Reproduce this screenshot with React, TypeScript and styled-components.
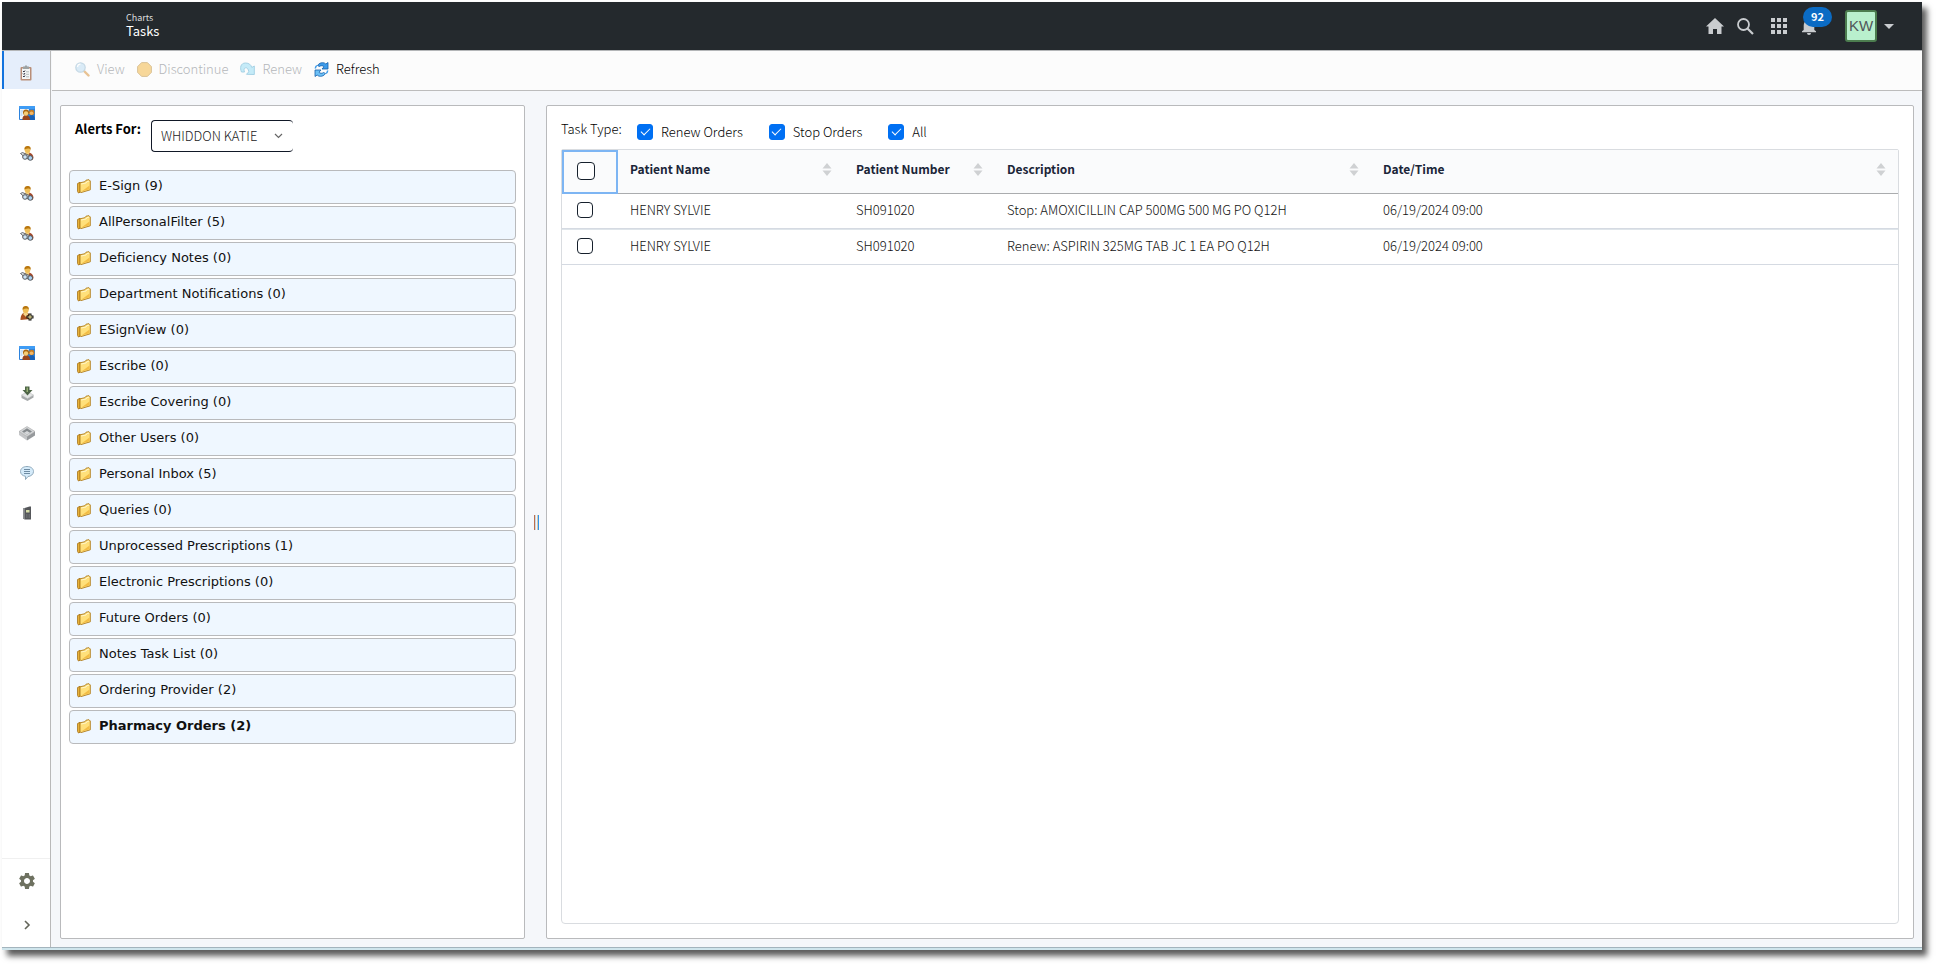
import React, { useState } from "react";
import styled, { createGlobalStyle } from "styled-components";

const SANS = '"Noto Sans CJK SC", "Noto Sans", sans-serif';
const WIDE = '"DejaVu Sans", Verdana, sans-serif';

const GlobalStyle = createGlobalStyle`
  *, *::before, *::after { box-sizing: border-box; }
  body { margin: 0; background: #fff; font-family: ${SANS}; font-size: 12px; line-height: 16px; color: #111; }
  button, select, input { font: inherit; color: inherit; margin: 0; padding: 0; }
  button { background: none; border: 0; cursor: pointer; }
  svg { display: block; flex: none; }
`;

const Page = styled.div`
  min-height: 100vh;
  padding: 2px 14px 14px 2px;
  display: flex;
`;

const Window = styled.div`
  flex: 1;
  min-width: 0;
  display: flex;
  flex-direction: column;
  background: #f5f7fa;
  border-bottom: 2px solid #cfe5ec;
  box-shadow: 5px 6px 6px #5c5c5c;
`;

const Header = styled.header`
  height: 49px;
  display: flex;
  align-items: center;
  justify-content: space-between;
  background: #24292d;
  border-bottom: 1px solid #b4b6b8;
  padding: 0 28px 0 124px;
`;

const Titles = styled.div`
  color: #fff;
  padding-bottom: 2px;
`;

const Crumb = styled.div`
  font-size: 9px;
  line-height: 12px;
  color: #dcdedf;
`;

const Title = styled.h1`
  margin: 0;
  font-size: 13px;
  line-height: 14px;
  font-weight: 400;
`;

const HeaderTools = styled.div`
  display: flex;
  align-items: center;
  color: #c9cccf;
`;

const HeaderButton = styled.button<{ $width: number }>`
  position: relative;
  width: ${(p) => p.$width}px;
  height: 32px;
  display: flex;
  align-items: center;
  justify-content: center;
`;

const Badge = styled.span`
  position: absolute;
  left: 5px;
  top: -3px;
  width: 29px;
  height: 20px;
  border-radius: 10px;
  background: #0b6bc4;
  color: #fff;
  font-size: 11px;
  line-height: 19px;
  font-weight: 700;
  text-align: center;
`;

const Account = styled.button`
  display: flex;
  align-items: center;
  gap: 7px;
  margin-left: 25px;
`;

const Avatar = styled.span`
  width: 32px;
  height: 32px;
  border: 2px solid #4c7d4f;
  border-radius: 3px;
  background: #b9f0cd;
  color: #50565a;
  font-family: "Liberation Sans", Arial, sans-serif;
  font-size: 15px;
  line-height: 28px;
  text-align: center;
`;

const Body = styled.div`
  flex: 1;
  display: flex;
  min-height: 0;
  border-bottom: 1px solid #a3b4bd;
`;

const Sidebar = styled.nav`
  flex: none;
  width: 49px;
  display: flex;
  flex-direction: column;
  justify-content: space-between;
  background: #fff;
  border-right: 1px solid #b9b9b9;
`;

const SideGroup = styled.div`
  display: flex;
  flex-direction: column;
  gap: 2px;
`;

const SideBottom = styled.div`
  border-top: 1px solid #f0f0f0;
  color: #6e7160;
`;

const SideButton = styled.button<{ $active?: boolean; $tall?: boolean }>`
  width: 48px;
  height: ${(p) => (p.$tall ? 44 : 38)}px;
  display: flex;
  align-items: center;
  justify-content: center;
  padding: ${(p) => (p.$tall ? "0 0 0 2px" : p.$active ? "6px 2px 0 0" : "6px 0 0 2px")};
  border-left: ${(p) => (p.$active ? "2px solid #1273de" : "0")};
  background: ${(p) => (p.$active ? "#e5eefb" : "transparent")};
`;

const Main = styled.main`
  flex: 1;
  min-width: 0;
  display: flex;
  flex-direction: column;
`;

const Toolbar = styled.div`
  flex: none;
  height: 40px;
  display: flex;
  align-items: center;
  gap: 12px;
  margin-left: 1px;
  padding: 0 0 3px 23px;
  background: #fcfcfc;
  border-bottom: 1px solid #bcbcbc;
`;

const ToolButton = styled.button`
  display: flex;
  align-items: center;
  gap: 7px;
  font-size: 13px;
  line-height: 18px;
  font-weight: 300;
  color: #000;
  &:disabled { color: #b4b7ba; cursor: default; }
  &:disabled svg { opacity: 0.5; }
`;

const Split = styled.div`
  flex: 1;
  display: flex;
  padding: 14px 8px 8px 9px;
`;

const Panel = styled.section`
  background: #fff;
  border: 1px solid #b9babc;
  border-radius: 2px;
`;

const AlertsPanel = styled(Panel)`
  flex: none;
  width: 465px;
  padding: 14px 8px;
`;

const TasksPanel = styled(Panel)`
  flex: 1;
  min-width: 0;
  display: flex;
  flex-direction: column;
  padding: 14px;
`;

const Gutter = styled.div`
  flex: none;
  width: 21px;
  display: flex;
  align-items: center;
  justify-content: center;
  padding-left: 2px;
`;

const AlertsFor = styled.div`
  display: flex;
  gap: 10px;
  padding-left: 6px;
  margin-bottom: 18px;
`;

const AlertsLabel = styled.label`
  font-size: 13px;
  line-height: 18px;
  font-weight: 700;
  color: #000;
`;

const SelectWrap = styled.div`
  position: relative;
  width: 142px;
  color: #222;
`;

const Select = styled.select`
  appearance: none;
  width: 100%;
  height: 32px;
  padding: 0 30px 0 9px;
  border: 1px solid #111827;
  border-right: 0;
  border-radius: 4px;
  background: #fff;
  font-size: 13px;
  font-weight: 300;
`;

const SelectArrow = styled.svg`
  position: absolute;
  right: 10px;
  top: 13px;
  pointer-events: none;
`;

const FolderList = styled.ul`
  list-style: none;
  margin: 0;
  padding: 0;
  display: flex;
  flex-direction: column;
  gap: 2px;
`;

const FolderButton = styled.button<{ $selected: boolean }>`
  width: 100%;
  height: 34px;
  display: flex;
  align-items: center;
  gap: 8px;
  padding: 0 7px 2px;
  border: 1px solid #b9babc;
  border-radius: 4px;
  background: #eff7ff;
  font-family: ${WIDE};
  font-size: 13px;
  line-height: 16px;
  font-weight: ${(p) => (p.$selected ? 700 : 400)};
  color: #111;
`;

const Filters = styled.fieldset`
  display: flex;
  height: 29px;
  margin: 0;
  padding: 0;
  border: 0;
`;

const FiltersTitle = styled.span`
  width: 76px;
  font-size: 13px;
  line-height: 18px;
  font-weight: 300;
  color: #000;
`;

const FilterLabel = styled.label`
  height: 24px;
  display: flex;
  align-items: center;
  gap: 8px;
  margin-right: 26px;
  font-size: 13px;
  font-weight: 300;
  color: #000;
`;

const Check = styled.input<{ $size?: number }>`
  appearance: none;
  flex: none;
  display: grid;
  place-items: center;
  width: ${(p) => p.$size || 16}px;
  height: ${(p) => p.$size || 16}px;
  border: 1px solid #16202c;
  border-radius: 4px;
  background: #fff;
  &:checked { background: #0070f3; border-color: #0070f3; border-radius: 3px; }
  &:checked::after {
    content: "";
    width: 9px;
    height: 5px;
    margin-bottom: 3px;
    border: solid #fff;
    border-width: 0 0 1px 1px;
    transform: rotate(-45deg);
  }
`;

const Grid = styled.div`
  flex: 1;
  border: 1px solid #d9dce0;
  border-radius: 2px 2px 4px 4px;
`;

const Table = styled.table`
  width: 100%;
  table-layout: fixed;
  border-collapse: separate;
  border-spacing: 0;
`;

const HeadCell = styled.th<{ $width?: number }>`
  width: ${(p) => (p.$width ? p.$width + "px" : "auto")};
  height: 44px;
  padding: 0 12px 5px 12px;
  background: #fafbfc;
  border-bottom: 1px solid #aaacae;
  color: #1b2538;
  text-align: left;
  font-size: 12px;
  font-weight: 700;
`;

const HeadCheckCell = styled(HeadCell)`
  padding: 0 0 2px 13px;
  border: 2px solid #7db5f3;
`;

const HeadInner = styled.button`
  width: 100%;
  display: flex;
  align-items: center;
  justify-content: space-between;
  font-weight: 700;
`;

const Row = styled.tr`
  & + & td { height: 36px; border-top: 1px solid #dfe5ea; }
`;

const Cell = styled.td`
  height: 35px;
  padding: 0 12px 2px;
  border-bottom: 1px solid #d5dae2;
  color: #111;
  font-size: 13px;
  font-weight: 300;
  white-space: nowrap;
  overflow: hidden;
`;

const CheckCell = styled(Cell)`
  padding: 0 0 2px 15px;
`;

const Clipboard = () => (
  <svg width="12" height="16" viewBox="0 0 12 16">
    <rect x=".5" y="2" width="11" height="13.5" rx="1" fill="#b98e78" />
    <rect x="2" y="3.5" width="8" height="10.5" fill="#f4f6f6" />
    <path d="M3 1.5h1.5L6 0l1.500 1.500H9V4H3z" fill="#9ca2a3" />
    <path d="M3 6l1 1 1-1.500M3 8.500l1 1 1-1.500M3 11l1 1 1-1.500" stroke="#334" strokeWidth="1" fill="none" />
    <path d="M6 6.800h3M6 9.300h3M6 11.800h3" stroke="#b5bcbc" />
  </svg>
);

const Contacts = () => (
  <svg width="16" height="14" viewBox="0 0 16 14">
    <rect width="16" height="14" rx="1" fill="#2b82dd" />
    <rect width="16" height="3" rx="1" fill="#3f9cf5" />
    <path d="M1 3h9L7 13H1z" fill="#f2f8ff" />
    <path d="M1.500 5h2.500M1.500 7h2M1.500 9h2" stroke="#9cc7ee" />
    <path d="M9.500 14c0-4 1.300-5 3.300-5S16 10.500 16 14z" fill="#1860b5" />
    <circle cx="12.700" cy="6.500" r="2.700" fill="#c67a22" />
    <circle cx="12.500" cy="7.300" r="1.800" fill="#f0b867" />
    <path d="M3.300 14c0-3.500 1.500-5 3.700-5s4 1.500 4 5z" fill="#98451c" />
    <circle cx="7" cy="6.500" r="3" fill="#a9660f" />
    <circle cx="7" cy="7.500" r="2.200" fill="#f4cd78" />
  </svg>
);

const Finder = () => (
  <svg width="14" height="15" viewBox="0 0 14 15">
    <path d="M2.500 11.500C2.500 8.500 4.500 6.500 8 6.500s5.500 2.500 5.500 5.500l-1 2z" fill="#a5492a" />
    <path d="M5.500 6h4l-.500 2.500-2 1.500-1.700-1.500z" fill="#f4cf7c" />
    <ellipse cx="7.500" cy="3.500" rx="2.900" ry="3.200" fill="#efbf58" />
    <path d="M4.600 3.500C4 1 6 0 7.700 0s3.500 1 2.900 3.800C9.500 2 7 2.500 4.600 3.500z" fill="#b9770f" />
    <path d="M.5 7.500l2-1 8 3.500-1.500 3-3-.500z" fill="#d4d8dc" stroke="#4d5358" strokeWidth=".8" />
    <circle cx="5" cy="11" r="2.300" fill="#cde3f5" stroke="#555b60" />
    <circle cx="10.300" cy="12" r="2.300" fill="#a9d0f0" stroke="#555b60" />
  </svg>
);

const PersonAdd = () => (
  <svg width="14" height="15" viewBox="0 0 14 15">
    <path d="M.5 14C.500 9 2.500 6.500 5.500 6.500S10.500 9 10.500 13z" fill="#a9501f" />
    <path d="M3.500 6h4l.500 2.500L6 11 3.500 8.500z" fill="#f6d488" />
    <ellipse cx="5.700" cy="3.700" rx="3" ry="3.300" fill="#efbf58" />
    <path d="M2.700 3.700C2.200 1 4 0 5.700 0s3.500 1 3 3.800C7.600 2 5 2.500 2.700 3.700z" fill="#b9770f" />
    <path d="M8.500 7.500h3v2h2v3h-2v2h-3v-2h-2v-3h2z" fill="#111" />
    <path d="M10 8.500v5M7.500 11h5" stroke="#f4e9a0" />
  </svg>
);

const TrayIn = () => (
  <svg width="13" height="15" viewBox="0 0 13 15">
    <path d="M.500 9L6.500 12.500 12.500 9v2.500L6.500 15 .500 12z" fill="#a6a9aa" />
    <path d="M.500 9L6.500 5.500 12.500 9 6.500 12.500z" fill="#e3e5e5" stroke="#aeb1b2" strokeWidth=".5" />
    <path d="M4 .500h4.500v3.500H11.500L6.500 9.500 1.500 4H4z" fill="#4d6446" />
    <path d="M6.200 1.500v4.500" stroke="#b7d18c" />
  </svg>
);

const Tray = () => (
  <svg width="16" height="15" viewBox="0 0 16 15">
    <path d="M0 5.500L8 10.500V14.500L0 9z" fill="#c4c6c8" />
    <path d="M8 10.500L16 5.500v4L8 14.500z" fill="#96999c" />
    <path d="M0 5.500L8 .500 16 5.500 8 10.500z" fill="#d4d6d8" stroke="#999" strokeWidth=".5" />
    <path d="M3 5.500l5-3.200 5 3.200L8 8.700z" fill="#858a8d" />
    <path d="M5 6.700l3-1.700 3 1.700L8 8.700z" fill="#d6d8da" />
  </svg>
);

const Speech = () => (
  <svg width="14" height="14" viewBox="0 0 14 14">
    <path d="M7 .500c3.800 0 6.500 2 6.500 5 0 2.800-2.500 4.800-5.500 5L5.500 13.500V10.300C2.500 9.800.500 8 .500 5.500c0-3 2.700-5 6.500-5z" fill="#d5ebfa" stroke="#8fa9bb" />
    <path d="M4 3.500h6M4 5.500h6M4 7.500h6" stroke="#6e8ca3" />
  </svg>
);

const Device = () => (
  <svg width="9" height="14" viewBox="0 0 9 14">
    <path d="M0 2.500L6.500.500H8V13.500H2L0 12.500z" fill="#55575a" />
    <path d="M0 2.500L1.800 2v11.500L0 12.500z" fill="#8f9193" />
    <rect x="3" y="4" width="3.500" height="2.500" fill="#d5dca8" />
    <path d="M3 9h4M3 11h4" stroke="#7d7f81" strokeDasharray="1 .5" />
  </svg>
);

const Gear = () => (
  <svg width="20" height="20" viewBox="0 0 24 24" fill="currentColor">
    <path d="M19.140 12.940c.040-.300.060-.610.060-.940 0-.320-.020-.640-.070-.940l2.030-1.580c.180-.140.230-.410.120-.610l-1.920-3.320c-.120-.220-.370-.290-.590-.220l-2.390.960c-.500-.380-1.030-.700-1.620-.940l-.360-2.540c-.040-.240-.240-.410-.480-.410h-3.840c-.240 0-.430.170-.470.410l-.360 2.540c-.590.240-1.130.570-1.620.940l-2.390-.960c-.220-.080-.470 0-.590.220L2.740 8.870c-.120.210-.080.470.120.610l2.030 1.580c-.050.300-.090.630-.090.940s.020.640.070.940l-2.030 1.580c-.180.140-.230.410-.120.610l1.920 3.320c.120.220.370.290.590.220l2.390-.960c.500.380 1.030.700 1.620.940l.360 2.540c.050.240.240.410.480.410h3.840c.240 0 .440-.170.470-.410l.360-2.540c.590-.240 1.130-.560 1.620-.940l2.390.960c.220.080.470 0 .590-.220l1.920-3.320c.120-.220.070-.470-.120-.610l-2.010-1.580zM12 15.600c-1.980 0-3.600-1.620-3.600-3.600s1.620-3.600 3.600-3.600 3.600 1.620 3.600 3.600-1.620 3.600-3.600 3.600z" />
  </svg>
);

const ChevronRight = () => (
  <svg width="8" height="10" viewBox="0 0 8 10">
    <path d="M2 1l4 4-4 4" stroke="#63655a" strokeWidth="1.600" fill="none" />
  </svg>
);

const Folder = () => (
  <svg width="14" height="15" viewBox="0 0 14 15">
    <path d="M.600 4.500L3 3.300V13.200L1.500 14 .600 12.500z" fill="#f0b93c" stroke="#a8741a" strokeWidth=".9" />
    <path d="M3 3.800L8 2.700 9 1.200 12 .700 13.300 2V10.800L4 13.600 3 12.800z" fill="#ffe07a" stroke="#b07d1c" strokeWidth=".9" />
    <path d="M4.200 5L9 4 10 2.500l2-.300" stroke="#fff6c8" fill="none" />
    <path d="M4.500 12.600L12.500 10.200V6.500z" fill="#f3bd45" />
  </svg>
);

const Magnifier = () => (
  <svg width="15" height="15" viewBox="0 0 15 15">
    <path d="M9 9l4.500 4.500" stroke="#d68a2c" strokeWidth="2.400" strokeLinecap="round" />
    <circle cx="5.500" cy="5.500" r="4.700" fill="#b9dcf3" stroke="#8fb6cf" strokeWidth="1.200" />
    <path d="M2.500 5a3 3 0 013-2.800" stroke="#fff" strokeWidth="1.200" fill="none" />
  </svg>
);

const Stop = () => (
  <svg width="15" height="15" viewBox="0 0 15 15">
    <path d="M4.600.600h5.800l4 4v5.800l-4 4H4.600l-4-4V4.600z" fill="#f3b338" stroke="#b78a3a" />
  </svg>
);

const Redo = () => (
  <svg width="15" height="14" viewBox="0 0 15 14">
    <path d="M1.500 10C-.300 6 .500 1 5.500 1c3.500 0 5.500 1.800 6.300 4.500L14.300 4V12.500L6.500 12.300 8.800 9.800C8.500 7 7 5.500 5.500 5.800 3.500 6.200 4 8.500 4.500 10z" fill="#8fdcf5" stroke="#52a8cf" />
  </svg>
);

const RefreshIcon = () => (
  <svg width="15" height="15" viewBox="0 0 15 15">
    <path d="M3.500 3.500C5 1.200 7 .700 8.500.700c1.700 0 2.700.600 3.300 1.300L14 .500V7H8l2-2.200C9 3.500 7 3.300 5.500 4.500z" fill="#3d9bea" stroke="#1760ab" strokeWidth=".8" />
    <path d="M11.500 11.500c-1.500 2.300-3.500 2.800-5 2.800-1.700 0-2.700-.600-3.300-1.300L1 14.500V8h6l-2 2.200c1 1.300 3 1.500 4.500.300z" fill="#6cc0f6" stroke="#1760ab" strokeWidth=".8" />
    <path d="M1.300 6.500C1.500 5 2 4.200 2.800 3.500M13.700 8.500c-.2 1.500-.7 2.300-1.500 3" stroke="#3d9bea" strokeWidth="1.500" fill="none" />
  </svg>
);

const Sort = () => (
  <svg width="10" height="13" viewBox="0 0 10 13" fill="#cfd1d3">
    <path d="M5 0l4.500 5.500h-9zM5 13L.500 7.500h9z" />
  </svg>
);

const Home = () => (
  <svg width="18" height="16" viewBox="0 0 18 16" fill="currentColor">
    <path d="M9 0L0 8.500h2.500V16H7v-5h4v5h4.500V8.500H18z" />
  </svg>
);

const Search = () => (
  <svg width="17" height="17" viewBox="0 0 17 17" fill="none" stroke="currentColor">
    <circle cx="6.500" cy="6.500" r="5.500" strokeWidth="1.800" />
    <path d="M10.500 10.500l5.500 5.500" strokeWidth="2.200" />
  </svg>
);

const Apps = () => (
  <svg width="16" height="16" viewBox="0 0 16 16" fill="currentColor">
    {[0, 6, 12].map((y) => [0, 6, 12].map((x) => <rect key={x + "-" + y} x={x} y={y} width="4" height="4" />))}
  </svg>
);

const Bell = () => (
  <svg width="14" height="17" viewBox="0 0 14 17" fill="currentColor">
    <path d="M7 17a2 2 0 002-2H5a2 2 0 002 2zM12.300 12V7.500c0-2.600-1.500-4.800-3.900-5.300V1.500a1.400 1.400 0 00-2.800 0v.700C3.100 2.700 1.700 4.900 1.700 7.500V12L0 13.200V14.200h14v-1z" />
  </svg>
);

const sideItems = [
  { label: "Tasks", icon: <Clipboard /> },
  { label: "Contacts", icon: <Contacts /> },
  { label: "Find patient", icon: <Finder /> },
  { label: "Find visit", icon: <Finder /> },
  { label: "Find provider", icon: <Finder /> },
  { label: "Find record", icon: <Finder /> },
  { label: "Add patient", icon: <PersonAdd /> },
  { label: "Groups", icon: <Contacts /> },
  { label: "Receive", icon: <TrayIn /> },
  { label: "Inbox", icon: <Tray /> },
  { label: "Messages", icon: <Speech /> },
  { label: "Device", icon: <Device /> },
];

const folders: [string, number][] = [
  ["E-Sign", 9],
  ["AllPersonalFilter", 5],
  ["Deficiency Notes", 0],
  ["Department Notifications", 0],
  ["ESignView", 0],
  ["Escribe", 0],
  ["Escribe Covering", 0],
  ["Other Users", 0],
  ["Personal Inbox", 5],
  ["Queries", 0],
  ["Unprocessed Prescriptions", 1],
  ["Electronic Prescriptions", 0],
  ["Future Orders", 0],
  ["Notes Task List", 0],
  ["Ordering Provider", 2],
  ["Pharmacy Orders", 2],
];

const columns = [
  { title: "Patient Name", width: 226 },
  { title: "Patient Number", width: 151 },
  { title: "Description", width: 376 },
  { title: "Date/Time" },
];

const tasks = [
  ["HENRY SYLVIE", "SH091020", "Stop: AMOXICILLIN CAP 500MG 500 MG PO Q12H", "06/19/2024 09:00"],
  ["HENRY SYLVIE", "SH091020", "Renew: ASPIRIN 325MG TAB JC 1 EA PO Q12H", "06/19/2024 09:00"],
];

export default function App() {
  const [selected, setSelected] = useState("Pharmacy Orders");

  return (
    <>
      <GlobalStyle />
      <Page>
        <Window>
          <Header>
            <Titles>
              <Crumb>Charts</Crumb>
              <Title>Tasks</Title>
            </Titles>
            <HeaderTools>
              <HeaderButton $width={30} aria-label="Home"><Home /></HeaderButton>
              <HeaderButton $width={30} aria-label="Search"><Search /></HeaderButton>
              <HeaderButton $width={38} aria-label="Applications"><Apps /></HeaderButton>
              <HeaderButton $width={22} aria-label="Notifications">
                <Bell />
                <Badge>92</Badge>
              </HeaderButton>
              <Account aria-label="Account">
                <Avatar>KW</Avatar>
                <svg width="10" height="5" viewBox="0 0 10 5" fill="currentColor"><path d="M0 0h10L5 5z" /></svg>
              </Account>
            </HeaderTools>
          </Header>
          <Body>
            <Sidebar>
              <SideGroup>
                {sideItems.map((item, i) => (
                  <SideButton key={item.label} $active={i === 0} aria-label={item.label}>{item.icon}</SideButton>
                ))}
              </SideGroup>
              <SideBottom>
                <SideButton $tall aria-label="Settings"><Gear /></SideButton>
                <SideButton $tall aria-label="Expand"><ChevronRight /></SideButton>
              </SideBottom>
            </Sidebar>
            <Main>
              <Toolbar>
                <ToolButton disabled><Magnifier />View</ToolButton>
                <ToolButton disabled><Stop />Discontinue</ToolButton>
                <ToolButton disabled><Redo />Renew</ToolButton>
                <ToolButton><RefreshIcon />Refresh</ToolButton>
              </Toolbar>
              <Split>
                <AlertsPanel>
                  <AlertsFor>
                    <AlertsLabel htmlFor="alerts-for">Alerts For:</AlertsLabel>
                    <SelectWrap>
                      <Select id="alerts-for"><option>WHIDDON KATIE</option></Select>
                      <SelectArrow width="9" height="6" viewBox="0 0 9 6">
                        <path d="M1 1l3.500 3.500L8 1" fill="none" stroke="#666" strokeWidth="1.200" />
                      </SelectArrow>
                    </SelectWrap>
                  </AlertsFor>
                  <FolderList>
                    {folders.map(([name, count]) => (
                      <li key={name}>
                        <FolderButton $selected={name === selected} onClick={() => setSelected(name)}>
                          <Folder />
                          {name} ({count})
                        </FolderButton>
                      </li>
                    ))}
                  </FolderList>
                </AlertsPanel>
                <Gutter>
                  <svg width="5" height="15" viewBox="0 0 5 15">
                    <rect width="1" height="15" fill="#bd6f4c" />
                    <rect x="1" width="1" height="15" fill="#c8d8e4" />
                    <rect x="3" width="1" height="15" fill="#d8c9ae" />
                    <rect x="4" width="1" height="15" fill="#2f95ea" />
                  </svg>
                </Gutter>
                <TasksPanel>
                  <Filters>
                    <FiltersTitle>Task Type:</FiltersTitle>
                    {["Renew Orders", "Stop Orders", "All"].map((name) => (
                      <FilterLabel key={name}>
                        <Check type="checkbox" defaultChecked />
                        {name}
                      </FilterLabel>
                    ))}
                  </Filters>
                  <Grid>
                    <Table>
                      <thead>
                        <tr>
                          <HeadCheckCell $width={56}>
                            <Check type="checkbox" $size={18} aria-label="Select all" />
                          </HeadCheckCell>
                          {columns.map((c) => (
                            <HeadCell key={c.title} $width={c.width}>
                              <HeadInner>{c.title}<Sort /></HeadInner>
                            </HeadCell>
                          ))}
                        </tr>
                      </thead>
                      <tbody>
                        {tasks.map((cells, i) => (
                          <Row key={i}>
                            <CheckCell>
                              <Check type="checkbox" aria-label={"Select task " + (i + 1)} />
                            </CheckCell>
                            {cells.map((text, j) => <Cell key={j}>{text}</Cell>)}
                          </Row>
                        ))}
                      </tbody>
                    </Table>
                  </Grid>
                </TasksPanel>
              </Split>
            </Main>
          </Body>
        </Window>
      </Page>
    </>
  );
}
